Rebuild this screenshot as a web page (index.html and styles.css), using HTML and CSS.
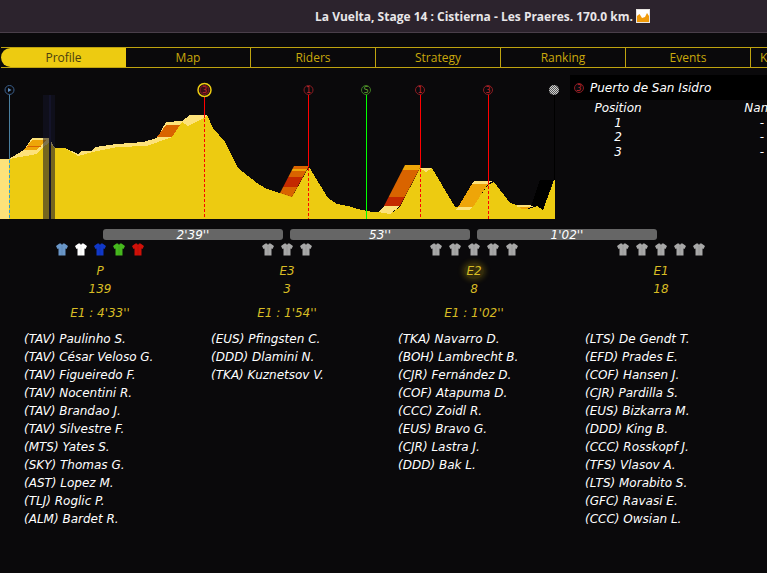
FILE: index.html
```html
<!doctype html>
<html>
<head>
<meta charset="UTF-8">
<title>La Vuelta, Stage 14</title>
<link rel="stylesheet" href="styles.css">
</head>
<body>
  <svg class="defs" width="0" height="0">
    <symbol id="jersey" viewBox="0 0 12 13">
      <path d="M3.500 0.500 L5 0.500 L6 2 L7 0.500 L8.500 0.500 L12 3 L10.500 6 L9.500 5.500 L9.500 12.500 L2.500 12.500 L2.500 5.500 L1.500 6 L0 3 Z"/>
      <path d="M5.500 3 H6.500 V12.500 H5.500 Z" fill="#000" fill-opacity="0.08"/>
    </symbol>
    <pattern id="checker" width="2" height="2" patternUnits="userSpaceOnUse">
      <rect width="2" height="2" fill="#d0d0d0"/>
      <rect width="1" height="1" fill="#555"/>
      <rect x="1" y="1" width="1" height="1" fill="#555"/>
    </pattern>
    <clipPath id="climb1"><polygon points="280,193 294,166 309,166 292,197"/></clipPath>
    <clipPath id="climb2"><polygon points="384,206 405,165 420,165 420,168 400,206"/></clipPath>
  </svg>

  <!--title bar-->
  <div class="topbar">
    <span class="stage-title">La Vuelta, Stage 14 : Cistierna - Les Praeres. 170.0 km.</span>
    <svg class="stage-icon" width="14" height="14" viewBox="0 0 14 14">
      <rect width="14" height="14" fill="#e8e4e0"/>
      <rect x="1" y="1" width="12" height="12" fill="#fff"/>
      <path d="M1 7 L3.500 5 L6 9 L9 8 L11 4 L13 7 V13 H1 Z" fill="#f09a0a"/>
    </svg>
  </div>

  <!--tabs-->
  <div class="tabs">
    <div class="tab active">Profile</div>
    <div class="tab">Map</div>
    <div class="tab">Riders</div>
    <div class="tab">Strategy</div>
    <div class="tab">Ranking</div>
    <div class="tab">Events</div>
    <div class="tab tab-cut">K</div>
  </div>

  <!--profile + climb panel-->
  <div class="stage">
    <svg class="profile" width="570" height="152" viewBox="0 68 570 152">
      <g class="crisp">
        <!--light top layer-->
        <path fill="#fde27a" d="M0 159 L9 159 L24 150 L32 138 L49 138 L55 148 L65 148 L78 154 L82 151 L92 151 L95 147 L117 144 L143 142 L157 138 L166 122 L182 121 L190 115 L207 115 L207 219 L0 219 Z"/>
        <!--yellow profile-->
        <path fill="#edcb11" d="M9 159 L37 154 L43 147 L49 143 L55 148 L65 148 L78 156 L93 152 L117 147 L147 146 L172 137 L182 122 L188 126 L204 118 L207 115 L213 128 L225 142 L238 168 L257 183 L267 189 L280 193 L292 197 L309 167 L328 198 L337 204 L352 207 L357 209 L373 212 L378 212 L390 214 L400 207 L420 168 L432 168 L455 207 L472 207 L488 185 L494 182 L510 203 L528 209 L537 206 L543 210 L554 180 L555 180 L555 219 L9 219 Z"/>
        <!--climb bands-->
        <path fill="#eea508" d="M24 150 L32 140 L46 140 L37 150 Z"/>
        <path fill="#d96400" d="M27 146 L41 146 L40 147 L26 147 Z"/>
        <path fill="#d96400" d="M157 137 L166 125 L180 125 L172 137 Z"/>
        <g clip-path="url(#climb1)">
          <rect x="280" y="166" width="30" height="3" fill="#d96400"/>
          <rect x="280" y="169" width="30" height="2" fill="#eea508"/>
          <rect x="280" y="171" width="30" height="6" fill="#d96400"/>
          <rect x="280" y="177" width="30" height="10" fill="#c42a00"/>
          <rect x="280" y="187" width="30" height="10" fill="#d96400"/>
        </g>
        <g clip-path="url(#climb2)">
          <rect x="380" y="165" width="42" height="5" fill="#eea508"/>
          <rect x="380" y="170" width="42" height="27" fill="#d96400"/>
          <rect x="380" y="197" width="42" height="9" fill="#c42a00"/>
        </g>
        <path fill="#fde27a" d="M378 212 L384 206 L400 206 L390 214 Z"/>
        <path fill="#fde27a" d="M420 168 L432 168 L426 172 Z"/>
        <path fill="#eea508" d="M458 207 L472 184 L488 184 L473 207 Z"/>
        <path fill="#fde27a" d="M474 181 L493 181 L488 184 L472 184 Z"/>
        <path fill="#fde27a" d="M456 210 L458 207 L473 207 L469 210 Z"/>
        <path fill="#fde27a" d="M517 205 L533 205 L533 207 L517 207 Z"/>
        <path fill="#eea508" d="M519 207 L531 207 L527 209 L522 209 Z"/>
        <path fill="#000" d="M531 206 L540 180 L553 180 L543 210 L537 206 Z"/>

        <!--night column-->
        <rect class="night" x="43" y="95" width="12" height="124"/>
        <rect class="night-core" x="49" y="95" width="2" height="124"/>
      </g>

      <!--sprint and climb lines-->
      <path class="mark-line" stroke="#4a7f9f" d="M9.500 94 V159"/>
      <path class="mark-dash" stroke="#2f9fd0" d="M9.500 160 V219"/>
      <path class="mark-line" stroke="#f00" d="M204.500 97 V118"/>
      <path class="mark-dash" stroke="#f00" d="M204.500 119 V219"/>
      <path class="mark-line" stroke="#f00" d="M308.500 95 V167"/>
      <path class="mark-dash" stroke="#f00" d="M308.500 168 V219"/>
      <path class="mark-line" stroke="#0f0" d="M366.500 95 V219"/>
      <path class="mark-line" stroke="#f00" d="M420.500 95 V168"/>
      <path class="mark-dash" stroke="#f00" d="M420.500 169 V219"/>
      <path class="mark-line" stroke="#f00" d="M488.500 95 V185"/>
      <path class="mark-dash" stroke="#f00" d="M488.500 186 V219"/>
      <path class="mark-line" stroke="#000" d="M554.500 95 V180"/>

      <!--markers-->
      <circle cx="9.500" cy="90" r="4.500" fill="#0a090b" stroke="#3a5f8c"/>
      <path d="M8 88 L11.500 90 L8 92 Z" fill="#5f8fc0"/>
      <circle cx="204.500" cy="90" r="6.500" fill="#0a090b" stroke="#edcb11" stroke-width="1.500"/>
      <circle cx="204.500" cy="90" r="4.500" fill="#3a0f14" stroke="#8c1c22"/>
      <text class="mark-num" x="204.500" y="93">3</text>
      <circle cx="308.500" cy="90" r="4.500" fill="#0a090b" stroke="#8c1c22"/>
      <text class="mark-num" x="308.500" y="93">1</text>
      <circle cx="366" cy="90" r="4.500" fill="#0a090b" stroke="#3f7a22"/>
      <text class="mark-num green" x="366" y="93">S</text>
      <circle cx="420" cy="90" r="4.500" fill="#0a090b" stroke="#8c1c22"/>
      <text class="mark-num" x="420" y="93">1</text>
      <circle cx="488" cy="90" r="4.500" fill="#0a090b" stroke="#8c1c22"/>
      <text class="mark-num" x="488" y="93">3</text>
      <circle cx="554" cy="90" r="5" fill="url(#checker)"/>
    </svg>

    <div class="climb">
      <div class="climb-head">
        <svg width="10" height="10" viewBox="0 0 10 10">
          <circle cx="5" cy="5" r="4.500" fill="#0a090b" stroke="#8c1c22"/>
          <text class="mark-num" x="5" y="8">3</text>
        </svg>
        <span>Puerto de San Isidro</span>
      </div>
      <div class="climb-grid">
        <div>Position</div><div>Name</div>
        <div>1</div><div>-</div>
        <div>2</div><div>-</div>
        <div>3</div><div>-</div>
      </div>
    </div>
  </div>

  <!--time gaps-->
  <div class="gaps">
    <div class="gap">2'39''</div>
    <div class="gap">53''</div>
    <div class="gap">1'02''</div>
  </div>

  <!--groups-->
  <div class="groups">
    <div class="group">
      <div class="jerseys">
        <svg class="jersey j-blue"><use href="#jersey"/></svg>
        <svg class="jersey j-white"><use href="#jersey"/></svg>
        <svg class="jersey j-navy"><use href="#jersey"/></svg>
        <svg class="jersey j-green"><use href="#jersey"/></svg>
        <svg class="jersey j-red"><use href="#jersey"/></svg>
      </div>
      <div class="info">P</div>
      <div class="info">139</div>
      <div class="info gap-info">E1 : 4'33''</div>
      <ul class="riders">
        <li>(TAV) Paulinho S.</li>
        <li>(TAV) César Veloso G.</li>
        <li>(TAV) Figueiredo F.</li>
        <li>(TAV) Nocentini R.</li>
        <li>(TAV) Brandao J.</li>
        <li>(TAV) Silvestre F.</li>
        <li>(MTS) Yates S.</li>
        <li>(SKY) Thomas G.</li>
        <li>(AST) Lopez M.</li>
        <li>(TLJ) Roglic P.</li>
        <li>(ALM) Bardet R.</li>
      </ul>
    </div>
    <div class="group">
      <div class="jerseys">
        <svg class="jersey"><use href="#jersey"/></svg>
        <svg class="jersey"><use href="#jersey"/></svg>
        <svg class="jersey"><use href="#jersey"/></svg>
      </div>
      <div class="info">E3</div>
      <div class="info">3</div>
      <div class="info gap-info">E1 : 1'54''</div>
      <ul class="riders">
        <li>(EUS) Pfingsten C.</li>
        <li>(DDD) Dlamini N.</li>
        <li>(TKA) Kuznetsov V.</li>
      </ul>
    </div>
    <div class="group">
      <div class="jerseys">
        <svg class="jersey"><use href="#jersey"/></svg>
        <svg class="jersey"><use href="#jersey"/></svg>
        <svg class="jersey"><use href="#jersey"/></svg>
        <svg class="jersey"><use href="#jersey"/></svg>
        <svg class="jersey"><use href="#jersey"/></svg>
      </div>
      <div class="info"><span class="glow">E2</span></div>
      <div class="info">8</div>
      <div class="info gap-info">E1 : 1'02''</div>
      <ul class="riders">
        <li>(TKA) Navarro D.</li>
        <li>(BOH) Lambrecht B.</li>
        <li>(CJR) Fernández D.</li>
        <li>(COF) Atapuma D.</li>
        <li>(CCC) Zoidl R.</li>
        <li>(EUS) Bravo G.</li>
        <li>(CJR) Lastra J.</li>
        <li>(DDD) Bak L.</li>
      </ul>
    </div>
    <div class="group">
      <div class="jerseys">
        <svg class="jersey"><use href="#jersey"/></svg>
        <svg class="jersey"><use href="#jersey"/></svg>
        <svg class="jersey"><use href="#jersey"/></svg>
        <svg class="jersey"><use href="#jersey"/></svg>
        <svg class="jersey"><use href="#jersey"/></svg>
      </div>
      <div class="info">E1</div>
      <div class="info">18</div>
      <div class="info gap-info">&nbsp;</div>
      <ul class="riders">
        <li>(LTS) De Gendt T.</li>
        <li>(EFD) Prades E.</li>
        <li>(COF) Hansen J.</li>
        <li>(CJR) Pardilla S.</li>
        <li>(EUS) Bizkarra M.</li>
        <li>(DDD) King B.</li>
        <li>(CCC) Rosskopf J.</li>
        <li>(TFS) Vlasov A.</li>
        <li>(LTS) Morabito S.</li>
        <li>(GFC) Ravasi E.</li>
        <li>(CCC) Owsian L.</li>
      </ul>
    </div>
  </div>
</body>
</html>
```

FILE: styles.css
```css
*{
	box-sizing: border-box;
}
html, body{
	width:100%;
	height:100%;
	overflow:hidden;
}
body{
	margin:0;
	padding:0;
	background:#0a090b;
	font-family:"DejaVu Sans", "Liberation Sans", sans-serif;
	font-size:12px;
	color:#fff;
}
.defs{
	display:block;
	height:0;
}
.topbar{
	height:33px;
	background:#2c232d;
	border-bottom:1px solid #4a3f4a;
	display:flex;
	align-items:center;
	padding-left:315px;
	gap:3px;
}
.stage-title{
	font-family:"Open Sans", "Liberation Sans", sans-serif;
	font-weight:700;
	font-size:12px;
	color:#e8e6e8;
}
.stage-icon{
	flex:none;
}
.tabs{
	display:flex;
	margin:14px 0 0 1px;
	height:21px;
	border-top:1px solid #bfa30f;
	border-bottom:1px solid #bfa30f;
	overflow:hidden;
}
.tab{
	width:125px;
	flex:none;
	text-align:center;
	font-family:"Open Sans", "Liberation Sans", sans-serif;
	font-size:12px;
	line-height:20px;
	color:#c9a80c;
	border-right:1px solid #bfa30f;
}
.tab.active{
	background:#edcb11;
	color:#4a4010;
	border-radius:11px 0 0 11px;
	border-right:0;
}
.tab.tab-cut{
	flex:1 0 0;
	min-width:0;
	text-align:left;
	padding-left:9px;
	border-right:0;
}
.stage{
	display:flex;
}
.profile{
	display:block;
	flex:none;
}
.crisp{
	shape-rendering:crispEdges;
}
.night{
	fill:#14142a;
	fill-opacity:0.55;
}
.night-core{
	fill:#14142a;
}
.mark-line, .mark-dash{
	fill:none;
	stroke-width:1;
}
.mark-dash{
	stroke-dasharray:3 2;
}
.mark-num{
	font-size:8px;
	text-anchor:middle;
	fill:#c0262c;
}
.mark-num.green{
	fill:#5fa030;
}
.climb{
	flex:none;
	width:197px;
	margin-top:7px;
	font-style:italic;
	overflow:hidden;
}
.climb-head{
	height:25px;
	background:#000;
	display:flex;
	align-items:center;
	gap:6px;
	padding-left:4px;
}
.climb-grid{
	display:grid;
	grid-template-columns:96px 192px;
	line-height:14.500px;
	text-align:center;
	width:288px;
	margin-top:1px;
}
.gaps{
	display:flex;
	gap:7px;
	margin-top:9px;
	padding-left:103px;
}
.gap{
	width:180px;
	height:11px;
	background:#666;
	border-radius:3px;
	font-style:italic;
	line-height:12px;
	text-align:center;
}
.groups{
	display:flex;
	padding-left:6.500px;
	margin-top:3px;
}
.group{
	width:187px;
	flex:none;
}
.jerseys{
	display:flex;
	justify-content:center;
	gap:7px;
	height:13px;
}
.jersey{
	width:12px;
	height:13px;
	fill:#a8a8a8;
}
.j-blue{
	fill:#6a97c9;
}
.j-white{
	fill:#fff;
}
.j-navy{
	fill:#1038c8;
}
.j-green{
	fill:#46b81e;
}
.j-red{
	fill:#d01008;
}
.info{
	text-align:center;
	font-style:italic;
	color:#d8bc24;
	line-height:18px;
}
.jerseys + .info{
	margin-top:6px;
}
.gap-info{
	margin-top:6px;
}
.glow{
	display:inline-block;
	border-radius:50%;
	background:rgba(237,203,17,.18);
	box-shadow:0 0 5px 2px rgba(237,203,17,.18);
	line-height:16px;
	padding:0 2px;
}
.riders{
	list-style:none;
	margin:8px 0 0 0;
	padding:0 0 0 17.500px;
	font-style:italic;
	line-height:18px;
	white-space:nowrap;
}
```
